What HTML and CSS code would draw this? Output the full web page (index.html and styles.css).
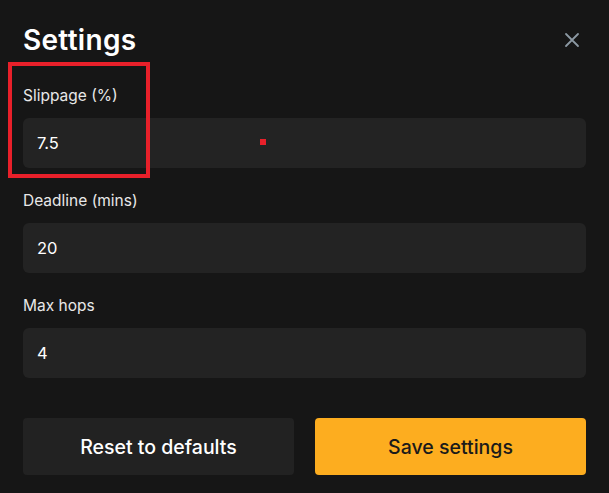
FILE: index.html
```html
<!DOCTYPE html>
<html>
<head>
<meta charset="utf-8">
<link rel="stylesheet" href="styles.css">
</head>
<body>
<div class="modal">
  <div class="header">
    <h1 class="title">Settings</h1>
    <button class="close" aria-label="Close">
      <svg width="16" height="16" viewBox="0 0 16 16"><path d="M2 2L14 14M14 2L2 14" stroke="#8c99a3" stroke-width="1.8" stroke-linecap="round"/></svg>
    </button>
  </div>
  <div class="field">
    <label class="label">Slippage (%)</label>
    <div class="input">7.5</div>
  </div>
  <div class="field">
    <label class="label">Deadline (mins)</label>
    <div class="input">20</div>
  </div>
  <div class="field">
    <label class="label">Max hops</label>
    <div class="input">4</div>
  </div>
  <div class="actions">
    <button class="btn btn-reset">Reset to defaults</button>
    <button class="btn btn-save">Save settings</button>
  </div>
  <div class="highlight"></div>
  <div class="dot"></div>
</div>
</body>
</html>
```

FILE: styles.css
```css
* { box-sizing: border-box; }
html, body {
  margin: 0;
  padding: 0;
  background: #161616;
  font-family: Inter, "Noto Sans", sans-serif;
  color: #f2f2f2;
}
.modal {
  position: relative;
  width: 609px;
  height: 493px;
  padding: 16px 23px 0 23px;
}
.header {
  display: flex;
  align-items: center;
  justify-content: space-between;
  height: 47px;
}
.title {
  margin: 0;
  font-size: 28px;
  font-weight: 600;
  letter-spacing: 0.3px;
  color: #ffffff;
}
.close {
  background: none;
  border: 0;
  padding: 0;
  margin-right: 6px;
  width: 16px;
  height: 16px;
  display: flex;
}
.field {
  display: flex;
  flex-direction: column;
}
.label {
  font-size: 15.5px;
  color: #e8e8e8;
  margin-top: 24px;
  height: 18px;
  line-height: 18px;
}
.input {
  margin-top: 13px;
  height: 50px;
  background: #232323;
  border-radius: 6px;
  padding-left: 14px;
  display: flex;
  align-items: center;
  font-size: 16.5px;
  color: #ffffff;
}
.actions {
  display: grid;
  grid-template-columns: 1fr 1fr;
  gap: 21px;
  margin-top: 40px;
}
.btn {
  height: 57px;
  border: 0;
  border-radius: 4px;
  font-family: inherit;
  font-size: 19.5px;
  font-weight: 500;
}
.btn-reset {
  background: #222222;
  color: #ffffff;
}
.btn-save {
  background: #fdad1f;
  color: #1a1a1a;
}
.highlight {
  position: absolute;
  left: 8px;
  top: 62px;
  width: 142px;
  height: 116px;
  border: 4px solid #e8202a;
}
.dot {
  position: absolute;
  left: 260px;
  top: 139px;
  width: 6px;
  height: 6px;
  background: #e8202a;
}
```
